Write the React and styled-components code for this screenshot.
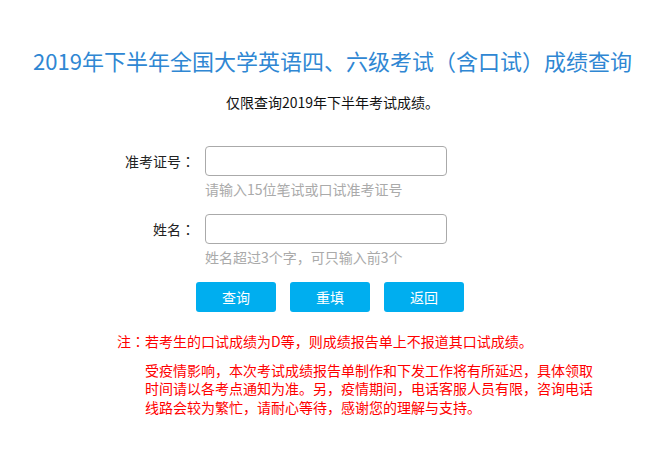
import React from "react";
import styled, { createGlobalStyle } from "styled-components";

const Global = createGlobalStyle`
  html, body { margin: 0; padding: 0; background: #fff; }
  body { font-family: "Microsoft YaHei", "Noto Sans CJK SC", "Noto Sans", sans-serif; color: #222; }
  * { box-sizing: border-box; }
`;

const Page = styled.div`
  width: 665px;
  padding-top: 45px;
`;

const Title = styled.h1`
  margin: 0;
  font-size: 22px;
  line-height: 30px;
  font-weight: normal;
  color: #2f87d3;
  text-align: center;
`;

const Sub = styled.p`
  margin: 17px 0 0;
  font-size: 14px;
  line-height: 20px;
  text-align: center;
  color: #111;
`;

const Colon = styled.span`
  font-family: "Noto Sans CJK JP", "Noto Sans CJK SC", sans-serif;
`;

const Form = styled.form`
  margin-top: 34px;
  display: flex;
  flex-direction: column;
  gap: 15px;
`;

const Field = styled.div`
  display: grid;
  grid-template-columns: 195px 242px;
  column-gap: 10px;
  row-gap: 3px;
  align-items: center;
`;

const Label = styled.label`
  font-size: 14px;
  line-height: 20px;
  text-align: right;
  color: #222;
`;

const Input = styled.input`
  width: 242px;
  height: 30px;
  border: 1px solid #aaa;
  border-radius: 4px;
  padding: 0 8px;
  font-size: 14px;
  outline: none;
`;

const Hint = styled.div`
  grid-column: 2;
  font-size: 14px;
  line-height: 20px;
  color: #aaa;
  white-space: nowrap;
`;

const Buttons = styled.div`
  display: flex;
  justify-content: center;
  gap: 14px;
  padding-right: 5px;
`;

const Button = styled.button`
  width: 80px;
  height: 30px;
  border: none;
  border-radius: 3px;
  background: #00aeef;
  color: #fff;
  font-family: inherit;
  font-size: 14px;
  cursor: pointer;
`;

const Notes = styled.div`
  margin: 20px 0 0 117px;
  width: 485px;
  color: #ff0000;
  font-size: 14px;
`;

const NoteLine = styled.p`
  margin: 0;
  line-height: 18px;
  white-space: nowrap;
`;

const NotePara = styled.p`
  margin: 11px 0 0;
  padding-left: 28px;
  line-height: 18.3px;
`;

export default function App() {
  return (
    <Page>
      <Global />
      <Title>2019年下半年全国大学英语四、六级考试（含口试）成绩查询</Title>
      <Sub>仅限查询2019年下半年考试成绩。</Sub>
      <Form onSubmit={(e) => e.preventDefault()}>
        <Field>
          <Label htmlFor="zkz">准考证号<Colon>：</Colon></Label>
          <Input id="zkz" />
          <Hint>请输入15位笔试或口试准考证号</Hint>
        </Field>
        <Field>
          <Label htmlFor="xm">姓名<Colon>：</Colon></Label>
          <Input id="xm" />
          <Hint>姓名超过3个字，可只输入前3个</Hint>
        </Field>
        <Buttons>
          <Button type="submit">查询</Button>
          <Button type="reset">重填</Button>
          <Button type="button">返回</Button>
        </Buttons>
      </Form>
      <Notes>
        <NoteLine>注<Colon>：</Colon>若考生的口试成绩为D等，则成绩报告单上不报道其口试成绩。</NoteLine>
        <NotePara>
          受疫情影响，本次考试成绩报告单制作和下发工作将有所延迟，具体领取时间请以各考点通知为准。另，疫情期间，电话客服人员有限，咨询电话线路会较为繁忙，请耐心等待，感谢您的理解与支持。
        </NotePara>
      </Notes>
    </Page>
  );
}
